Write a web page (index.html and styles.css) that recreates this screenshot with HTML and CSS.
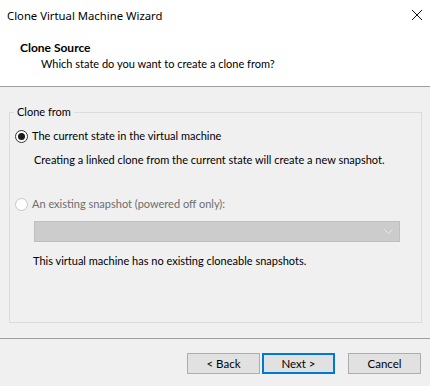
FILE: index.html
```html
<html>
	<head>
		<link rel="stylesheet" href="styles.css">
	</head>
	<body>
		<div class="titlebar">
			<span class="title">Clone Virtual Machine Wizard</span>
			<svg class="close" width="12" height="12" viewBox="0 0 12 12">
				<path d="M1 1 L11 11 M11 1 L1 11" stroke="#111" stroke-width="1" fill="none"/>
			</svg>
		</div>
		<div class="header">
			<div class="heading">Clone Source</div>
			<div class="subheading">Which state do you want to create a clone from?</div>
		</div>
		<div class="content">
			<fieldset class="group">
				<legend>Clone from</legend>
				<div class="option">
					<span class="radio checked"></span>
					<span>The current state in the virtual machine</span>
				</div>
				<div class="note">Creating a linked clone from the current state will create a new snapshot.</div>
				<div class="option disabled second">
					<span class="radio"></span>
					<span>An existing snapshot (powered off only):</span>
				</div>
				<div class="combo">
					<svg width="9" height="6" viewBox="0 0 9 6">
						<path d="M0.5 0.5 L4.5 4.5 L8.5 0.5" stroke="#e8e8e8" stroke-width="1" fill="none"/>
					</svg>
				</div>
				<div class="note last">This virtual machine has no existing cloneable snapshots.</div>
			</fieldset>
		</div>
		<div class="footer">
			<button class="btn">&lt; Back</button>
			<button class="btn default">Next &gt;</button>
			<button class="btn cancel">Cancel</button>
		</div>
	</body>
</html>
```

FILE: styles.css
```css
body{
	margin:0;
	width:430px;
	height:386px;
	overflow:hidden;
	background-color:#f0f0f0;
	font-family:Lato, "Noto Sans", sans-serif;
	font-size:11px;
	color:#000;
	white-space:nowrap;
}
.titlebar{
	height:30px;
	background-color:#fff;
	display:flex;
	align-items:center;
	justify-content:space-between;
	padding:0 7px;
}
.title{
	font-family:"Noto Sans", sans-serif;
	font-size:11.3px;
}
.header{
	height:57px;
	background-color:#fff;
	border-bottom:1px solid #a0a0a0;
	padding-left:20px;
	box-sizing:border-box;
	padding-top:10px;
	line-height:16px;
}
.heading{
	font-weight:bold;
	font-size:12px;
}
.subheading{
	padding-left:21px;
}
.content{
	padding-top:17px;
}
.group{
	margin:0 8px 0 9px;
	padding:0;
	height:219px;
	box-sizing:border-box;
	border:1px solid #dcdcdc;
	line-height:16px;
}
.group legend{
	margin-left:4px;
	padding:0 3px;
}
.option{
	display:flex;
	align-items:center;
	margin-top:8px;
	padding-left:5px;
}
.option.second{
	margin-top:28px;
}
.disabled{
	color:#6d6d6d;
}
.radio{
	width:11px;
	height:11px;
	border:1px solid #333;
	border-radius:50%;
	background-color:#fff;
	margin-right:4px;
	display:flex;
	align-items:center;
	justify-content:center;
}
.radio.checked::after{
	content:"";
	width:7px;
	height:7px;
	border-radius:50%;
	background-color:#1a1a1a;
}
.disabled .radio{
	border-color:#c8c8c8;
}
.note{
	margin-top:8px;
	padding-left:24px;
}
.note.last{
	margin-top:11px;
	padding-left:23px;
}
.combo{
	margin:9px 0 0 24px;
	width:366px;
	height:21px;
	box-sizing:border-box;
	background-color:#cccccc;
	border:1px solid #bfbfbf;
	display:flex;
	align-items:center;
	justify-content:flex-end;
	padding-right:6px;
}
.footer{
	margin-top:15px;
	border-top:1px solid #a0a0a0;
	padding-top:14px;
	display:flex;
	justify-content:flex-end;
	padding-right:9px;
}
.btn{
	width:73px;
	height:21px;
	box-sizing:border-box;
	background-color:#e1e1e1;
	border:1px solid #adadad;
	font-family:Lato, "Noto Sans", sans-serif;
	font-size:11.5px;
	color:#000;
	padding:0;
	margin-left:2px;
}
.btn.default{
	border:2px solid #0078d7;
}
.btn.cancel{
	margin-left:13px;
}
```
